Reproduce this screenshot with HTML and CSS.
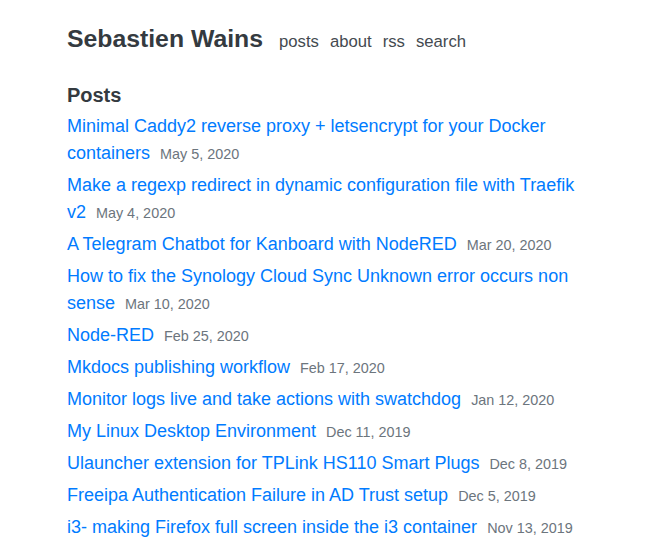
FILE: index.html
```html
<!DOCTYPE html>
<html lang="en">
<head>
<meta charset="utf-8">
<title>Sebastien Wains</title>
<link rel="stylesheet" href="styles.css">
</head>
<body>
<div class="container">
  <header class="site-header">
    <h1 class="site-title">Sebastien Wains</h1>
    <nav class="site-nav">
      <a href="#">posts</a>
      <a href="#">about</a>
      <a href="#">rss</a>
      <a href="#">search</a>
    </nav>
  </header>
  <main>
    <h2 class="section-title">Posts</h2>
    <ul class="post-list">
      <li><a href="#">Minimal Caddy2 reverse proxy + letsencrypt for your Docker containers</a> <span class="date">May 5, 2020</span></li>
      <li><a href="#">Make a regexp redirect in dynamic configuration file with Traefik v2</a> <span class="date">May 4, 2020</span></li>
      <li><a href="#">A Telegram Chatbot for Kanboard with NodeRED</a> <span class="date">Mar 20, 2020</span></li>
      <li><a href="#">How to fix the Synology Cloud Sync Unknown error occurs non sense</a> <span class="date">Mar 10, 2020</span></li>
      <li><a href="#">Node-RED</a> <span class="date">Feb 25, 2020</span></li>
      <li><a href="#">Mkdocs publishing workflow</a> <span class="date">Feb 17, 2020</span></li>
      <li><a href="#">Monitor logs live and take actions with swatchdog</a> <span class="date">Jan 12, 2020</span></li>
      <li><a href="#">My Linux Desktop Environment</a> <span class="date">Dec 11, 2019</span></li>
      <li><a href="#">Ulauncher extension for TPLink HS110 Smart Plugs</a> <span class="date">Dec 8, 2019</span></li>
      <li><a href="#">Freeipa Authentication Failure in AD Trust setup</a> <span class="date">Dec 5, 2019</span></li>
      <li><a href="#">i3- making Firefox full screen inside the i3 container</a> <span class="date">Nov 13, 2019</span></li>
      <li><a href="#">Ansible: run a task against a specific host only</a> <span class="date">Oct 30, 2019</span></li>
    </ul>
  </main>
</div>
</body>
</html>
```

FILE: styles.css
```css
html, body {
  margin: 0;
  padding: 0;
  background: #fff;
}

body {
  font-family: "Liberation Sans", Arial, sans-serif;
  color: #343a40;
  font-size: 18px;
}

a {
  text-decoration: none;
}

.container {
  box-sizing: border-box;
  width: 80%;
  margin: 0 auto;
  padding-right: 15px;
}

.site-header {
  display: flex;
  align-items: baseline;
  padding-top: 24px;
}

.site-title {
  margin: 0;
  font-size: 24.8px;
  line-height: 30px;
  font-weight: bold;
  color: #343a40;
}

.site-nav {
  display: flex;
  gap: 11px;
  margin-left: 16px;
  font-size: 16.7px;
}

.site-nav a {
  color: #444a50;
}

.section-title {
  margin: 29px 0 5.5px;
  font-size: 20px;
  line-height: 24px;
  font-weight: bold;
  color: #343a40;
}

.post-list {
  list-style: none;
  margin: 0;
  padding: 0;
}

.post-list li {
  line-height: 27px;
  margin-bottom: 5px;
}

.post-list a {
  color: #007bff;
}

.date {
  margin-left: 5px;
  font-size: 14.4px;
  line-height: 1;
  color: #6c757d;
  white-space: nowrap;
}
```
